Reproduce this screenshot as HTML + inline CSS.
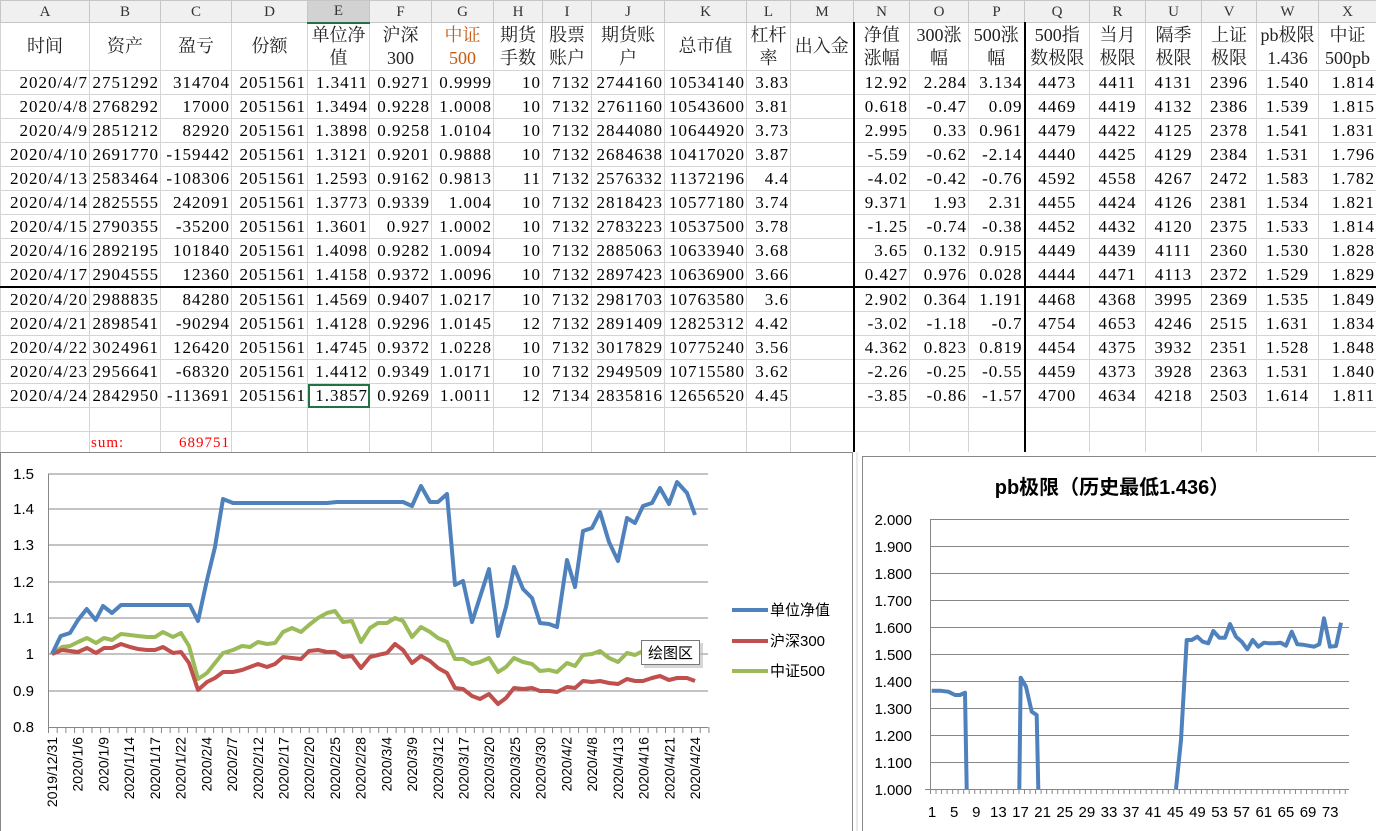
<!DOCTYPE html>
<html><head><meta charset="utf-8">
<style>
*{margin:0;padding:0;box-sizing:border-box}
body{width:1376px;height:831px;overflow:hidden;background:#fff;position:relative;font-family:"Liberation Serif","Noto Serif CJK SC",serif}
table{border-collapse:collapse;table-layout:fixed;position:absolute;left:0;top:0;width:1376px}
td{border:1px solid #d4d4d4;font-size:17px;white-space:nowrap;overflow:hidden;padding:0 1px;text-align:right;color:#000;line-height:23px}
tr.L td{background:#f0f0f0;border-color:#c6c6c6;text-align:center;font-size:15px;color:#333;height:22px;line-height:20px}
tr.L td.sel{background:#d2d2d2;border-bottom:2px solid #217346}
tr.H td{height:48px;text-align:center;line-height:23px;font-size:18px;color:#222}
tr.D td{height:24px;letter-spacing:1px}
tr.D td.c{text-align:center}
td.m{border-right:2px solid #000 !important}
td.p{border-right:2px solid #000 !important}
tr.bt td{border-bottom:2px solid #000}
.sel2{outline:2px solid #217346;outline-offset:-2px}
</style></head><body>
<table>
<colgroup>
<col style="width:89px"><col style="width:71px"><col style="width:71px"><col style="width:76px"><col style="width:62px"><col style="width:62px"><col style="width:62px"><col style="width:49px"><col style="width:49px"><col style="width:73px"><col style="width:82px"><col style="width:44px"><col style="width:63px"><col style="width:56px"><col style="width:59px"><col style="width:56px"><col style="width:65px"><col style="width:56px"><col style="width:56px"><col style="width:55px"><col style="width:62px"><col style="width:58px">
</colgroup>
<tr class="L"><td>A</td><td>B</td><td>C</td><td>D</td><td class="sel">E</td><td>F</td><td>G</td><td>H</td><td>I</td><td>J</td><td>K</td><td>L</td><td>M</td><td>N</td><td>O</td><td>P</td><td>Q</td><td>R</td><td>U</td><td>V</td><td>W</td><td>X</td></tr>
<tr class="H"><td>时间</td><td>资产</td><td>盈亏</td><td>份额</td><td>单位净<br>值</td><td>沪深<br>300</td><td style="color:#c55a11">中证<br>500</td><td>期货<br>手数</td><td>股票<br>账户</td><td>期货账<br>户</td><td>总市值</td><td>杠杆<br>率</td><td class="m">出入金</td><td>净值<br>涨幅</td><td>300涨<br>幅</td><td class="p">500涨<br>幅</td><td>500指<br>数极限</td><td>当月<br>极限</td><td>隔季<br>极限</td><td>上证<br>极限</td><td>pb极限<br>1.436</td><td>中证<br>500pb</td></tr>
<tr class="D"><td>2020/4/7</td><td>2751292</td><td>314704</td><td>2051561</td><td>1.3411</td><td>0.9271</td><td>0.9999</td><td>10</td><td>7132</td><td>2744160</td><td>10534140</td><td>3.83</td><td class="m"></td><td>12.92</td><td>2.284</td><td class="p">3.134</td><td class="c">4473</td><td class="c">4411</td><td class="c">4131</td><td class="c">2396</td><td class="c">1.540</td><td>1.814</td></tr>
<tr class="D"><td>2020/4/8</td><td>2768292</td><td>17000</td><td>2051561</td><td>1.3494</td><td>0.9228</td><td>1.0008</td><td>10</td><td>7132</td><td>2761160</td><td>10543600</td><td>3.81</td><td class="m"></td><td>0.618</td><td>-0.47</td><td class="p">0.09</td><td class="c">4469</td><td class="c">4419</td><td class="c">4132</td><td class="c">2386</td><td class="c">1.539</td><td>1.815</td></tr>
<tr class="D"><td>2020/4/9</td><td>2851212</td><td>82920</td><td>2051561</td><td>1.3898</td><td>0.9258</td><td>1.0104</td><td>10</td><td>7132</td><td>2844080</td><td>10644920</td><td>3.73</td><td class="m"></td><td>2.995</td><td>0.33</td><td class="p">0.961</td><td class="c">4479</td><td class="c">4422</td><td class="c">4125</td><td class="c">2378</td><td class="c">1.541</td><td>1.831</td></tr>
<tr class="D"><td>2020/4/10</td><td>2691770</td><td>-159442</td><td>2051561</td><td>1.3121</td><td>0.9201</td><td>0.9888</td><td>10</td><td>7132</td><td>2684638</td><td>10417020</td><td>3.87</td><td class="m"></td><td>-5.59</td><td>-0.62</td><td class="p">-2.14</td><td class="c">4440</td><td class="c">4425</td><td class="c">4129</td><td class="c">2384</td><td class="c">1.531</td><td>1.796</td></tr>
<tr class="D"><td>2020/4/13</td><td>2583464</td><td>-108306</td><td>2051561</td><td>1.2593</td><td>0.9162</td><td>0.9813</td><td>11</td><td>7132</td><td>2576332</td><td>11372196</td><td>4.4</td><td class="m"></td><td>-4.02</td><td>-0.42</td><td class="p">-0.76</td><td class="c">4592</td><td class="c">4558</td><td class="c">4267</td><td class="c">2472</td><td class="c">1.583</td><td>1.782</td></tr>
<tr class="D"><td>2020/4/14</td><td>2825555</td><td>242091</td><td>2051561</td><td>1.3773</td><td>0.9339</td><td>1.004</td><td>10</td><td>7132</td><td>2818423</td><td>10577180</td><td>3.74</td><td class="m"></td><td>9.371</td><td>1.93</td><td class="p">2.31</td><td class="c">4455</td><td class="c">4424</td><td class="c">4126</td><td class="c">2381</td><td class="c">1.534</td><td>1.821</td></tr>
<tr class="D"><td>2020/4/15</td><td>2790355</td><td>-35200</td><td>2051561</td><td>1.3601</td><td>0.927</td><td>1.0002</td><td>10</td><td>7132</td><td>2783223</td><td>10537500</td><td>3.78</td><td class="m"></td><td>-1.25</td><td>-0.74</td><td class="p">-0.38</td><td class="c">4452</td><td class="c">4432</td><td class="c">4120</td><td class="c">2375</td><td class="c">1.533</td><td>1.814</td></tr>
<tr class="D"><td>2020/4/16</td><td>2892195</td><td>101840</td><td>2051561</td><td>1.4098</td><td>0.9282</td><td>1.0094</td><td>10</td><td>7132</td><td>2885063</td><td>10633940</td><td>3.68</td><td class="m"></td><td>3.65</td><td>0.132</td><td class="p">0.915</td><td class="c">4449</td><td class="c">4439</td><td class="c">4111</td><td class="c">2360</td><td class="c">1.530</td><td>1.828</td></tr>
<tr class="D bt"><td>2020/4/17</td><td>2904555</td><td>12360</td><td>2051561</td><td>1.4158</td><td>0.9372</td><td>1.0096</td><td>10</td><td>7132</td><td>2897423</td><td>10636900</td><td>3.66</td><td class="m"></td><td>0.427</td><td>0.976</td><td class="p">0.028</td><td class="c">4444</td><td class="c">4471</td><td class="c">4113</td><td class="c">2372</td><td class="c">1.529</td><td>1.829</td></tr>
<tr class="D"><td>2020/4/20</td><td>2988835</td><td>84280</td><td>2051561</td><td>1.4569</td><td>0.9407</td><td>1.0217</td><td>10</td><td>7132</td><td>2981703</td><td>10763580</td><td>3.6</td><td class="m"></td><td>2.902</td><td>0.364</td><td class="p">1.191</td><td class="c">4468</td><td class="c">4368</td><td class="c">3995</td><td class="c">2369</td><td class="c">1.535</td><td>1.849</td></tr>
<tr class="D"><td>2020/4/21</td><td>2898541</td><td>-90294</td><td>2051561</td><td>1.4128</td><td>0.9296</td><td>1.0145</td><td>12</td><td>7132</td><td>2891409</td><td>12825312</td><td>4.42</td><td class="m"></td><td>-3.02</td><td>-1.18</td><td class="p">-0.7</td><td class="c">4754</td><td class="c">4653</td><td class="c">4246</td><td class="c">2515</td><td class="c">1.631</td><td>1.834</td></tr>
<tr class="D"><td>2020/4/22</td><td>3024961</td><td>126420</td><td>2051561</td><td>1.4745</td><td>0.9372</td><td>1.0228</td><td>10</td><td>7132</td><td>3017829</td><td>10775240</td><td>3.56</td><td class="m"></td><td>4.362</td><td>0.823</td><td class="p">0.819</td><td class="c">4454</td><td class="c">4375</td><td class="c">3932</td><td class="c">2351</td><td class="c">1.528</td><td>1.848</td></tr>
<tr class="D"><td>2020/4/23</td><td>2956641</td><td>-68320</td><td>2051561</td><td>1.4412</td><td>0.9349</td><td>1.0171</td><td>10</td><td>7132</td><td>2949509</td><td>10715580</td><td>3.62</td><td class="m"></td><td>-2.26</td><td>-0.25</td><td class="p">-0.55</td><td class="c">4459</td><td class="c">4373</td><td class="c">3928</td><td class="c">2363</td><td class="c">1.531</td><td>1.840</td></tr>
<tr class="D"><td>2020/4/24</td><td>2842950</td><td>-113691</td><td>2051561</td><td class="sel2">1.3857</td><td>0.9269</td><td>1.0011</td><td>12</td><td>7134</td><td>2835816</td><td>12656520</td><td>4.45</td><td class="m"></td><td>-3.85</td><td>-0.86</td><td class="p">-1.57</td><td class="c">4700</td><td class="c">4634</td><td class="c">4218</td><td class="c">2503</td><td class="c">1.614</td><td>1.811</td></tr>
<tr class="D"><td></td><td></td><td></td><td></td><td></td><td></td><td></td><td></td><td></td><td></td><td></td><td></td><td class="m"></td><td></td><td></td><td class="p"></td><td></td><td></td><td></td><td></td><td></td><td></td></tr>
<tr class="D"><td></td><td style="text-align:left;color:#f00;font-size:15px">sum:</td><td style="color:#f00;font-size:15px">689751</td><td></td><td></td><td></td><td></td><td></td><td></td><td></td><td></td><td></td><td class="m"></td><td></td><td></td><td class="p"></td><td></td><td></td><td></td><td></td><td></td><td></td></tr>
</table>

<svg width="1376" height="831" style="position:absolute;left:0;top:0" font-family="Liberation Sans, Noto Sans CJK SC, sans-serif">
<rect x="853" y="452" width="523" height="379" fill="#fff"/>
<line x1="857" y1="452" x2="857" y2="831" stroke="#d4d4d4"/>
<rect x="0.5" y="452.5" width="852" height="380" fill="#fff" stroke="#888"/>
<g stroke="#878787" stroke-width="1">
<line x1="48" y1="474" x2="708" y2="474"/><line x1="48" y1="509" x2="708" y2="509"/><line x1="48" y1="545" x2="708" y2="545"/><line x1="48" y1="582" x2="708" y2="582"/><line x1="48" y1="618" x2="708" y2="618"/><line x1="48" y1="654" x2="708" y2="654"/><line x1="48" y1="691" x2="708" y2="691"/><line x1="48" y1="727.5" x2="708" y2="727.5"/>
<line x1="48.5" y1="474" x2="48.5" y2="733"/>
</g>
<g id="ticks" stroke="#878787"></g>
<g font-size="15" fill="#000" text-anchor="end">
<text x="34" y="479">1.5</text><text x="34" y="514">1.4</text><text x="34" y="550">1.3</text><text x="34" y="587">1.2</text><text x="34" y="623">1.1</text><text x="34" y="659">1</text><text x="34" y="696">0.9</text><text x="34" y="732">0.8</text>
</g>
<g id="xl" font-size="14" fill="#000" text-anchor="end"></g>
<g fill="none" stroke-width="4" stroke-linejoin="round">
<polyline stroke="#9bbb59" points="52,654 62,647 70,646 78,642 87,638 96,643 104,638 112,640 121,634 130,635 138,636 147,637 155,637 163,632 173,637 181,633 189,646 198,679 207,673 215,663 223,653 233,650 242,646 250,647 258,642 267,644 275,643 283,632 292,628 301,632 309,625 318,618 327,613 335,611 343,622 352,621 361,642 370,628 378,623 387,623 395,618 403,621 412,637 421,627 430,632 438,638 447,642 455,659 463,659 472,664 480,662 489,658 498,672 506,667 514,658 523,662 532,664 540,671 549,670 557,672 567,663 575,666 583,655 592,654 600,651 609,658 618,662 627,653 635,655 643,651 652,650 660,649 669,650 677,648 687,649 695,648"/>
<polyline stroke="#c0504d" points="52,654 62,650 70,651 78,652 87,648 96,653 104,648 112,648 121,644 130,647 138,649 147,650 155,650 163,647 173,653 181,652 189,663 198,690 207,682 215,678 223,672 233,672 242,670 250,667 258,664 267,667 275,664 283,657 292,658 301,659 309,651 318,650 327,652 335,652 343,657 352,656 361,668 370,657 378,655 387,653 395,644 403,650 412,663 421,656 430,661 438,668 447,673 455,688 463,689 472,696 480,699 489,694 498,704 506,698 514,688 523,689 532,688 540,691 549,691 557,692 567,687 575,688 583,681 592,682 600,681 609,683 618,684 627,679 635,681 643,681 652,678 660,676 669,680 677,678 687,678 695,681"/>
<polyline stroke="#4f81bd" points="52,654 60.7,636 70,633 78,620 86.7,609 95.7,620 103,606 112,613 121,605 190,605 198,621 207,580 215,547 223,499 233,503 327,503 337,502 403,502 412,506 421,486 430,502 438,502 447,494 455,585 463,581 472,622 480,597 489,569 498,636 506,607 514,567 523,589 532,598 540,623 549,624 557,627 567,560 575,587 583,531 592,528 600,512 609,542 618,561 627,518 635,523 643,506 652,503 660,488 669,504 677,482 687,493 695,515"/>
</g>
<rect x="644" y="643" width="59" height="25" fill="#bbb" opacity="0.6"/>
<rect x="641.5" y="640.5" width="58" height="24" fill="#fff" stroke="#777"/>
<text x="648" y="658" font-size="15" fill="#000">绘图区</text>
<g stroke-width="4"><line x1="732" y1="610" x2="768" y2="610" stroke="#4f81bd"/><line x1="732" y1="641" x2="768" y2="641" stroke="#c0504d"/><line x1="732" y1="671" x2="768" y2="671" stroke="#9bbb59"/></g>
<g font-size="15" fill="#000"><text x="770" y="615">单位净值</text><text x="770" y="646">沪深300</text><text x="770" y="676">中证500</text></g>

<rect x="862.5" y="456.5" width="514" height="376" fill="#fff" stroke="#888"/>
<text x="1112" y="494" font-size="20" font-weight="bold" text-anchor="middle" fill="#000">pb极限（历史最低1.436）</text>
<g stroke="#878787">
<line x1="930" y1="519.5" x2="1349" y2="519.5"/><line x1="930" y1="546.5" x2="1349" y2="546.5"/><line x1="930" y1="573.5" x2="1349" y2="573.5"/><line x1="930" y1="600.5" x2="1349" y2="600.5"/><line x1="930" y1="627.5" x2="1349" y2="627.5"/><line x1="930" y1="654.5" x2="1349" y2="654.5"/><line x1="930" y1="681.5" x2="1349" y2="681.5"/><line x1="930" y1="708.5" x2="1349" y2="708.5"/><line x1="930" y1="735.5" x2="1349" y2="735.5"/><line x1="930" y1="762.5" x2="1349" y2="762.5"/><line x1="925" y1="789.5" x2="1349" y2="789.5"/>
<line x1="930.5" y1="519" x2="930.5" y2="794"/>
</g>
<g id="ticks2" stroke="#878787"></g>
<g font-size="15" fill="#000" text-anchor="end">
<text x="912" y="525">2.000</text><text x="912" y="552">1.900</text><text x="912" y="579">1.800</text><text x="912" y="606">1.700</text><text x="912" y="633">1.600</text><text x="912" y="660">1.500</text><text x="912" y="687">1.400</text><text x="912" y="714">1.300</text><text x="912" y="741">1.200</text><text x="912" y="768">1.100</text><text x="912" y="795">1.000</text>
</g>
<g id="xl2" font-size="15" fill="#000" text-anchor="middle"></g>
<g fill="none" stroke="#4f81bd" stroke-width="4" stroke-linejoin="round">
<polyline points="931.7,690.7 940,690.7 948.3,691.7 955,695 960,695 965,692.7 966.7,789"/>
<polyline points="1019.3,789 1020.7,677.7 1026,686.7 1031.7,711.7 1036.7,715 1038.3,789"/>
<polyline points="1176,789 1181,740 1186.7,640 1191.7,640 1197.3,636.7 1202.7,641.7 1208.3,643.3 1213.3,631 1219.3,637.7 1225,637.7 1230,624 1236,636.7 1241.7,641.7 1247.3,649.3 1252.7,640 1258.3,646.7 1264,642.7 1269.3,643.3 1275,643.3 1280.7,642.7 1286,645.7 1291.7,631.7 1297.3,644.3 1302.7,644.7 1308.3,645.7 1314,646.7 1319.3,644.3 1324,618.3 1330,646.7 1336,646 1341,622.7"/>
</g>
</svg>
<script>
(function(){
var ns="http://www.w3.org/2000/svg";
var t=document.getElementById("ticks");
for(var i=0;i<=76;i++){var x=48.5+i*8.69;if(x>709)break;var l=document.createElementNS(ns,"line");l.setAttribute("x1",x);l.setAttribute("x2",x);l.setAttribute("y1",727);l.setAttribute("y2",733);t.appendChild(l);}
var labs=["2019/12/31","2020/1/6","2020/1/9","2020/1/14","2020/1/17","2020/1/22","2020/2/4","2020/2/7","2020/2/12","2020/2/17","2020/2/20","2020/2/25","2020/2/28","2020/3/4","2020/3/9","2020/3/12","2020/3/17","2020/3/20","2020/3/25","2020/3/30","2020/4/2","2020/4/8","2020/4/13","2020/4/16","2020/4/21","2020/4/24"];
var g=document.getElementById("xl");
labs.forEach(function(s,i){var x=52+i*25.72+5;var e=document.createElementNS(ns,"text");e.setAttribute("transform","translate("+x+",737) rotate(-90)");e.textContent=s;g.appendChild(e);});
var t2=document.getElementById("ticks2");
for(var i=0;i<=76;i++){var x=930.5+i*5.53;if(x>1349.5)break;var l=document.createElementNS(ns,"line");l.setAttribute("x1",x);l.setAttribute("x2",x);l.setAttribute("y1",789);l.setAttribute("y2",794);t2.appendChild(l);}
var g2=document.getElementById("xl2");
for(var n=1;n<=73;n+=4){var e=document.createElementNS(ns,"text");e.setAttribute("x",932+(n-1)*5.53);e.setAttribute("y",817);e.textContent=n;g2.appendChild(e);}
})();
</script>
</body></html>
